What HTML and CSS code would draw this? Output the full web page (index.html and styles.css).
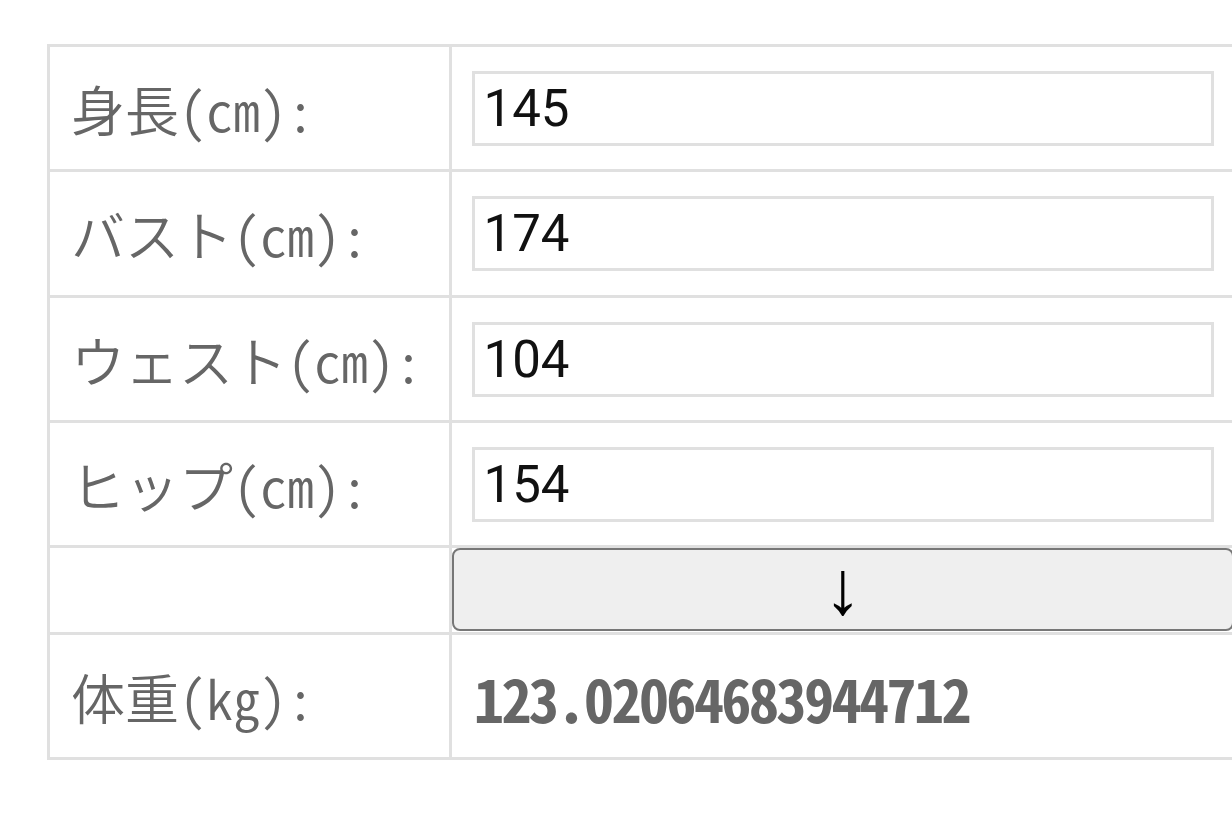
FILE: index.html
```html
<!DOCTYPE html>
<html lang="ja">
<head>
<meta charset="utf-8">
<title>体重計算</title>
<link rel="stylesheet" href="styles.css">
</head>
<body>
<div class="form">
  <div class="cell label">身長(cm):</div>
  <div class="cell field"><input class="num" type="text" value="145"></div>

  <div class="cell label">バスト(cm):</div>
  <div class="cell field"><input class="num" type="text" value="174"></div>

  <div class="cell label">ウェスト(cm):</div>
  <div class="cell field"><input class="num" type="text" value="104"></div>

  <div class="cell label">ヒップ(cm):</div>
  <div class="cell field"><input class="num" type="text" value="154"></div>

  <div class="cell blank"></div>
  <div class="cell action"><button class="calc" type="button">↓</button></div>

  <div class="cell label">体重(kg):</div>
  <div class="cell field result">123.02064683944712</div>
</div>
</body>
</html>
```

FILE: styles.css
```css
html, body {
  margin: 0;
  padding: 0;
  background: #ffffff;
  overflow: hidden;
}

body {
  font-family: "Noto Sans CJK JP", "Noto Sans", sans-serif;
}

.form {
  display: grid;
  grid-template-columns: 402px 785px;
  grid-template-rows: 125px 126px 125px 125px 87px 125px;
  margin: 44px 0 0 47px;
  width: max-content;
  border-top: 3px solid #e0e0e0;
  border-left: 3px solid #e0e0e0;
}

.cell {
  box-sizing: border-box;
  border-right: 3px solid #e0e0e0;
  border-bottom: 3px solid #e0e0e0;
  display: flex;
  align-items: center;
}

.label {
  padding-left: 21px;
  font-size: 54px;
  font-weight: 350;
  color: #666666;
  font-feature-settings: "hwid" 1;
  white-space: nowrap;
}

.field {
  justify-content: center;
}

.num {
  box-sizing: border-box;
  width: 95%;
  height: 75px;
  margin: 0;
  padding: 0 9px;
  border: 3px solid #e0e0e0;
  border-radius: 0;
  background: #ffffff;
  font-family: Roboto, "Liberation Sans", sans-serif;
  font-size: 51px;
  color: #111111;
  outline: none;
}

.action {
  padding: 0;
  align-items: stretch;
}

.calc {
  flex: 1;
  margin: 0 0 1px 0;
  border: 2px solid #777777;
  border-radius: 8px;
  background: #efefef;
  font-family: "Liberation Sans", "DejaVu Sans", sans-serif;
  font-size: 76px;
  line-height: 1;
  color: #000000;
  padding: 0 0 10px 0;
}

.result {
  justify-content: flex-start;
  padding-left: 22px;
  font-size: 60px;
  letter-spacing: -2.5px;
  font-weight: 700;
  color: #666666;
  font-feature-settings: "hwid" 1;
  white-space: nowrap;
}
```
